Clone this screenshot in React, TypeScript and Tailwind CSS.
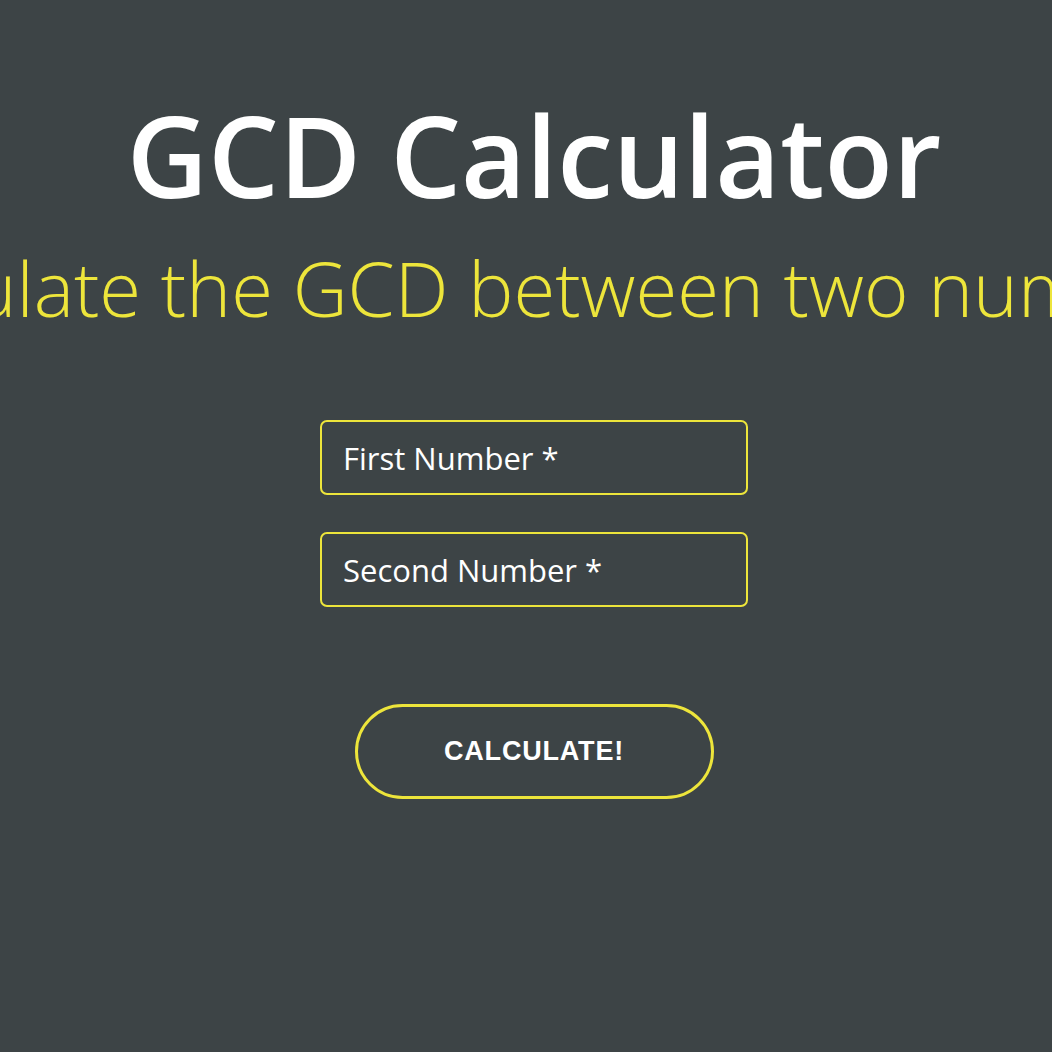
export default function App() {
  return (
    <div className="min-h-[1052px] w-full bg-[#3d4446] overflow-hidden pl-4" style={{ fontFamily: '"Open Sans", sans-serif' }}>
      <div className="flex flex-col items-center">
        <h1 className="mt-[90px] text-[112px] leading-[130px] font-semibold text-white whitespace-nowrap">GCD Calculator</h1>
        <p className="mt-[18px] text-[76px] leading-[100px] font-light text-[#ede53b] whitespace-nowrap">Calculate the GCD between two numbers</p>
        <form className="mt-[82px] flex flex-col items-center gap-[37px]" onSubmit={(e) => e.preventDefault()}>
          <input
            type="text"
            placeholder="First Number *"
            className="w-[428px] h-[75px] rounded-[7px] border-2 border-[#ede53b] bg-transparent px-[21px] text-[31px] text-white placeholder:text-white outline-none"
          />
          <input
            type="text"
            placeholder="Second Number *"
            className="w-[428px] h-[75px] rounded-[7px] border-2 border-[#ede53b] bg-transparent px-[21px] text-[31px] text-white placeholder:text-white outline-none"
          />
          <button
            type="submit"
            className="mt-[60px] w-[359px] h-[95px] rounded-full border-[3px] border-[#ede53b] bg-transparent text-white text-[27px] font-bold tracking-[0.8px]"
            style={{ fontFamily: '"Liberation Sans", Arial, sans-serif' }}
          >
            CALCULATE!
          </button>
        </form>
      </div>
    </div>
  );
}
